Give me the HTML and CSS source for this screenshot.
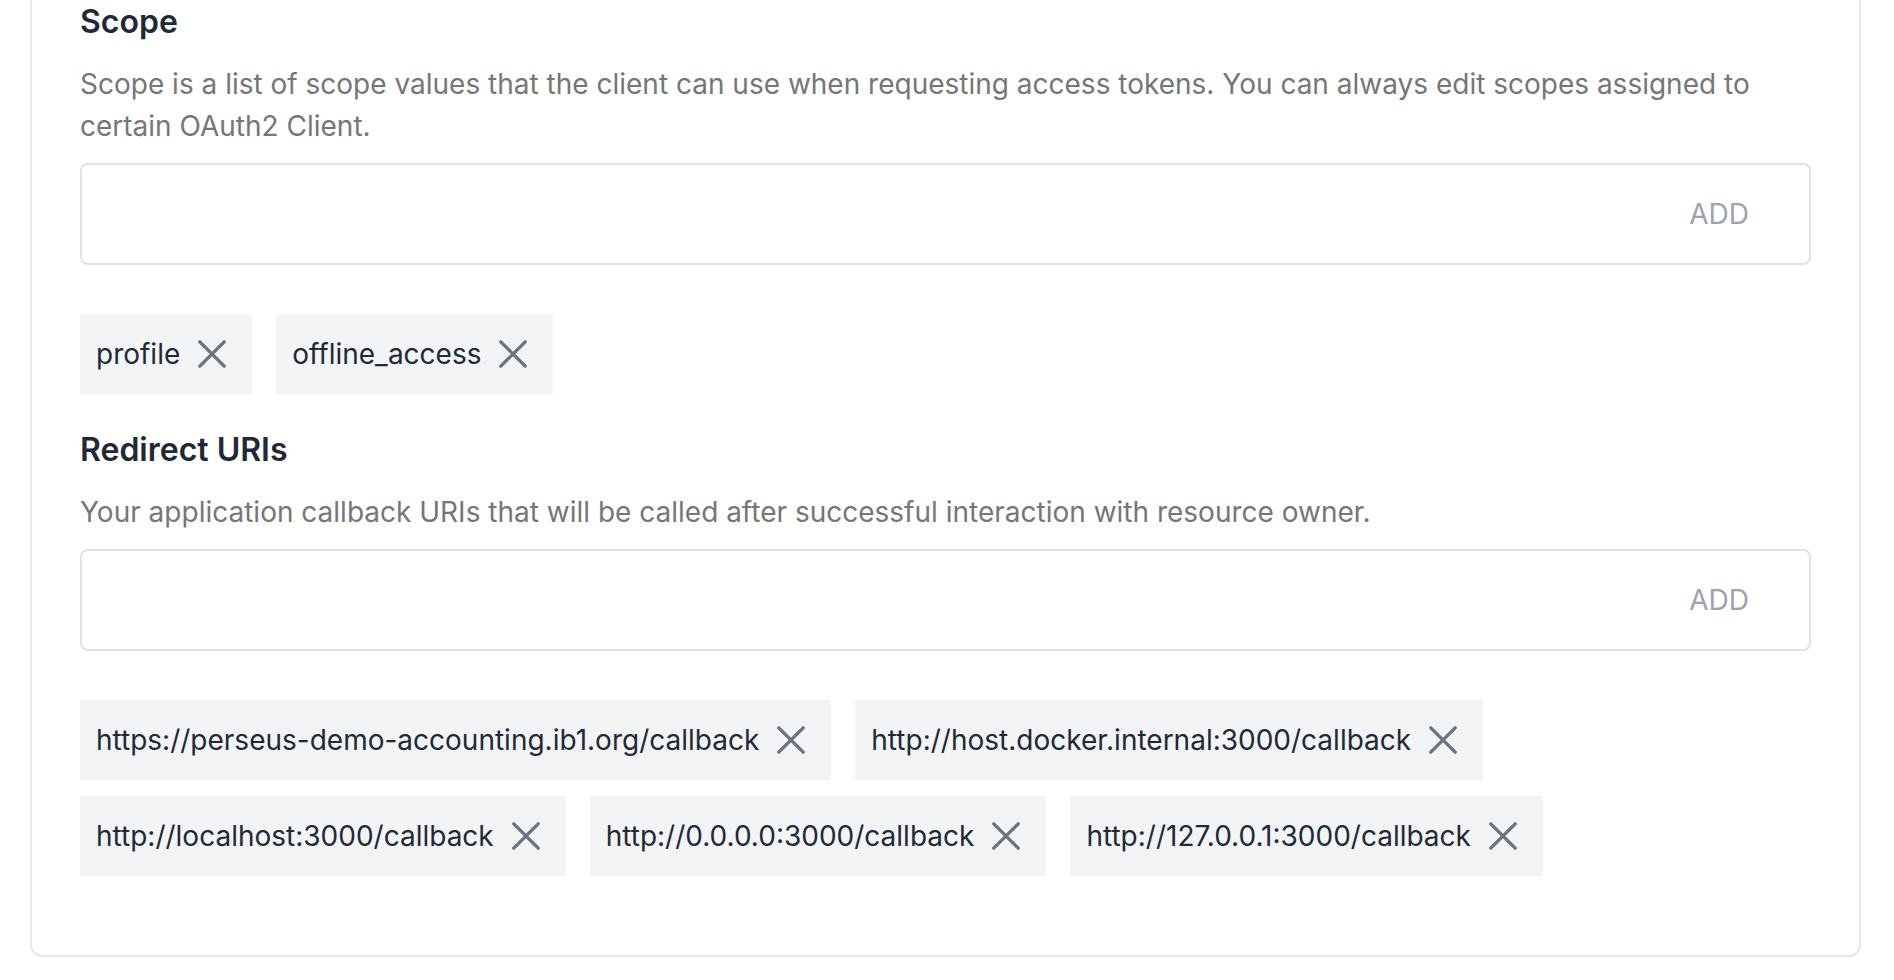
FILE: index.html
```html
<!DOCTYPE html>
<html lang="en">
<head>
<meta charset="utf-8">
<title>OAuth2 Client</title>
<link rel="stylesheet" href="styles.css">
</head>
<body>
<div class="card">
  <section class="field">
    <h3 class="field-title">Scope</h3>
    <p class="field-desc">Scope is a list of scope values that the client can use when requesting access tokens. You can always edit scopes assigned to certain OAuth2 Client.</p>
    <div class="add-box">
      <input class="add-input" type="text" aria-label="Scope">
      <button class="add-btn" type="button">ADD</button>
    </div>
    <ul class="chips">
      <li class="chip"><span class="chip-text">profile</span><button class="chip-x" type="button" aria-label="Remove"><svg viewBox="0 0 28 28" width="28" height="28"><path d="M1.8 1.8L26.2 26.2M26.2 1.8L1.8 26.2"/></svg></button></li>
      <li class="chip"><span class="chip-text">offline_access</span><button class="chip-x" type="button" aria-label="Remove"><svg viewBox="0 0 28 28" width="28" height="28"><path d="M1.8 1.8L26.2 26.2M26.2 1.8L1.8 26.2"/></svg></button></li>
    </ul>
  </section>
  <section class="field">
    <h3 class="field-title">Redirect URIs</h3>
    <p class="field-desc">Your application callback URIs that will be called after successful interaction with resource owner.</p>
    <div class="add-box">
      <input class="add-input" type="text" aria-label="Redirect URI">
      <button class="add-btn" type="button">ADD</button>
    </div>
    <ul class="chips">
      <li class="chip"><span class="chip-text">https://perseus-demo-accounting.ib1.org/callback</span><button class="chip-x" type="button" aria-label="Remove"><svg viewBox="0 0 28 28" width="28" height="28"><path d="M1.8 1.8L26.2 26.2M26.2 1.8L1.8 26.2"/></svg></button></li>
      <li class="chip"><span class="chip-text">http://host.docker.internal:3000/callback</span><button class="chip-x" type="button" aria-label="Remove"><svg viewBox="0 0 28 28" width="28" height="28"><path d="M1.8 1.8L26.2 26.2M26.2 1.8L1.8 26.2"/></svg></button></li>
      <li class="chip"><span class="chip-text">http://localhost:3000/callback</span><button class="chip-x" type="button" aria-label="Remove"><svg viewBox="0 0 28 28" width="28" height="28"><path d="M1.8 1.8L26.2 26.2M26.2 1.8L1.8 26.2"/></svg></button></li>
      <li class="chip"><span class="chip-text">http://0.0.0.0:3000/callback</span><button class="chip-x" type="button" aria-label="Remove"><svg viewBox="0 0 28 28" width="28" height="28"><path d="M1.8 1.8L26.2 26.2M26.2 1.8L1.8 26.2"/></svg></button></li>
      <li class="chip"><span class="chip-text">http://127.0.0.1:3000/callback</span><button class="chip-x" type="button" aria-label="Remove"><svg viewBox="0 0 28 28" width="28" height="28"><path d="M1.8 1.8L26.2 26.2M26.2 1.8L1.8 26.2"/></svg></button></li>
    </ul>
  </section>
</div>
</body>
</html>
```
FILE: styles.css
```css
* { box-sizing: border-box; }
html, body { margin: 0; padding: 0; background: #ffffff; }
body {
  font-family: Inter, "Noto Sans", sans-serif;
  color: #1f2937;
  overflow: hidden;
}
.card {
  margin: -48px 33px 0 30px;
  border: 2px solid #e5e7eb;
  border-radius: 12px;
  padding: 48px 48px 48px 48px;
  background: #ffffff;
  display: flex;
  flex-direction: column;
  gap: 36px;
}
.field { display: flex; flex-direction: column; }
.field-title {
  margin: 0;
  font-size: 32px;
  line-height: 40px;
  font-weight: 600;
  color: #1f2937;
}
.field-desc {
  margin: 21px 0 0 0;
  font-size: 28px;
  line-height: 42px;
  font-weight: 400;
  color: #767676;
}
.add-box {
  margin-top: 16px;
  height: 102px;
  border: 2px solid #dfe2e6;
  border-radius: 8px;
  display: flex;
  align-items: center;
  padding: 0 60px 0 24px;
}
.add-input {
  flex: 1;
  border: 0;
  outline: none;
  background: transparent;
  font: inherit;
  font-size: 28px;
  color: #1f2937;
}
.add-btn {
  border: 0;
  background: transparent;
  padding: 0;
  font-family: inherit;
  font-size: 28px;
  line-height: 40px;
  font-weight: 400;
  color: #9ca3af;
  cursor: pointer;
}
.chips {
  list-style: none;
  margin: 49px 0 0 0;
  padding: 0;
  display: flex;
  flex-wrap: wrap;
  gap: 16px 24px;
}
.field:last-child .chips { margin-bottom: 31px; }
.chip {
  height: 80px;
  background: #f3f4f6;
  display: flex;
  align-items: center;
  padding: 0 26px 0 16px;
  gap: 18px;
}
.chip-text {
  font-size: 28px;
  line-height: 40px;
  color: #1f2937;
  white-space: nowrap;
}
.chip-x {
  border: 0;
  background: transparent;
  padding: 0;
  width: 28px;
  height: 28px;
  display: flex;
  cursor: pointer;
}
.chip-x svg {
  display: block;
  fill: none;
  stroke: #6b7280;
  stroke-width: 3.3;
  stroke-linecap: round;
}
```
